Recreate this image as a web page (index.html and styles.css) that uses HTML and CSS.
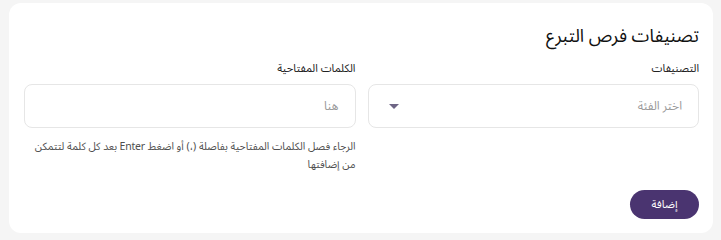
FILE: index.html
```html
<!DOCTYPE html>
<html lang="ar" dir="rtl">
<head>
<meta charset="utf-8">
<link rel="stylesheet" href="styles.css">
</head>
<body>
<div class="card">
  <h1 class="title">تصنيفات فرص التبرع</h1>
  <div class="fields">
    <div class="field">
      <label class="label">التصنيفات</label>
      <div class="input select">
        <span class="placeholder">اختر الفئة</span>
        <svg class="caret" width="10" height="5" viewBox="0 0 10 5"><path d="M0 0 H10 L5 5 Z" fill="#6e6585"/></svg>
      </div>
    </div>
    <div class="field">
      <label class="label">الكلمات المفتاحية</label>
      <div class="input">
        <span class="placeholder">هنا</span>
      </div>
      <p class="help">الرجاء فصل الكلمات المفتاحية بفاصلة (،) أو اضغط Enter بعد كل كلمة لتتمكن من إضافتها</p>
    </div>
  </div>
  <div class="actions">
    <button class="btn">إضافة</button>
  </div>
</div>
</body>
</html>
```
FILE: styles.css
```css
html, body {
  margin: 0;
  padding: 0;
  background: #f5f5f5;
}
body {
  font-family: "Noto Sans Arabic", "Noto Kufi Arabic", "DejaVu Sans", sans-serif;
  color: #222;
  padding: 3px 8px 7px 9px;
  width: 721px;
  height: 240px;
  box-sizing: border-box;
}
.card {
  background: #fff;
  border-radius: 12px;
  height: 230px;
  box-sizing: border-box;
  padding: 20px 14px 0 15px;
  display: flex;
  flex-direction: column;
}
.title {
  margin: 0;
  font-size: 18px;
  font-weight: normal;
  line-height: 26px;
  color: #111;
}
.fields {
  display: flex;
  gap: 12px;
  margin-top: 12px;
}
.field {
  flex: 1;
  display: flex;
  flex-direction: column;
}
.label {
  font-size: 11px;
  line-height: 16px;
  color: #222;
  margin-bottom: 7px;
}
.input {
  height: 44px;
  border: 1px solid #e6e6e6;
  border-radius: 8px;
  box-sizing: border-box;
  display: flex;
  align-items: center;
  justify-content: space-between;
  padding: 0 16px;
}
.placeholder {
  font-size: 12px;
  color: #9a9a9a;
}
.caret {
  margin-left: 4px;
}
.help {
  margin: 10px 0 0;
  font-size: 10.5px;
  line-height: 18px;
  color: #4f4f4f;
  letter-spacing: -0.2px;
}
.actions {
  margin-top: auto;
  margin-bottom: 14px;
  display: flex;
}
.btn {
  font-family: inherit;
  background: #4a3470;
  color: #fff;
  border: none;
  border-radius: 16px;
  height: 29px;
  width: 69px;
  font-size: 11px;
}
```
